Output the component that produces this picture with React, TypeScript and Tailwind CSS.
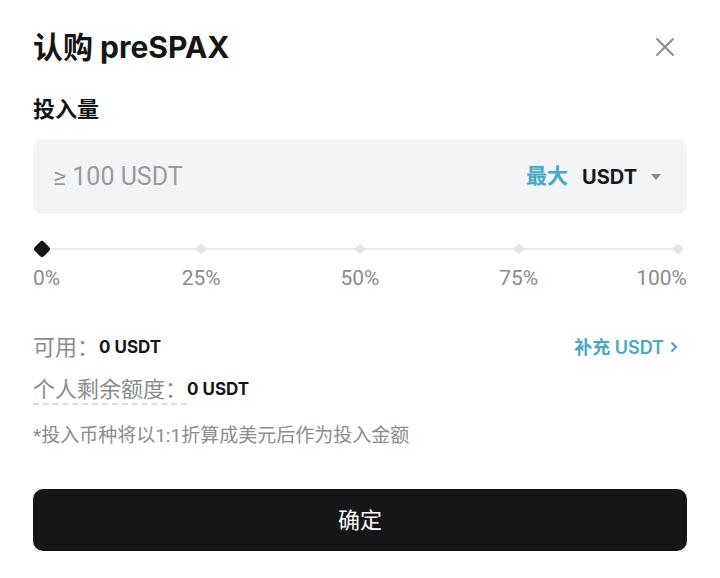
import { X } from "lucide-react";

const FONT = { fontFamily: 'Roboto, "Noto Sans CJK SC", sans-serif' };
const BOLD = { fontFamily: 'Inter, "Noto Sans CJK SC", sans-serif' };

const MARKS = [
  { label: "0%", pos: "0%", align: "justify-start" },
  { label: "25%", pos: "25%", align: "justify-center" },
  { label: "50%", pos: "50%", align: "justify-center" },
  { label: "75%", pos: "75%", align: "justify-center" },
  { label: "100%", pos: "100%", align: "justify-end" },
];

function Slider() {
  return (
    <div className="mt-[25px]">
      <div className="relative h-[20px] mx-[9px]">
        <div className="absolute left-0 right-0 top-1/2 h-[2px] -translate-y-1/2 bg-[#e9e9eb]" />
        {MARKS.map((m, i) => (
          <div
            key={m.label}
            className="absolute top-1/2 -translate-x-1/2 -translate-y-1/2"
            style={{ left: m.pos }}
          >
            {i === 0 ? (
              <div className="w-[13px] h-[13px] rotate-45 rounded-[3px] bg-[#161618]" />
            ) : (
              <div className="w-[8px] h-[8px] rotate-45 rounded-[1px] bg-[#e4e4e6]" />
            )}
          </div>
        ))}
      </div>
      <div className="mt-[7px] flex justify-between h-[24px] leading-[24px] text-[21px] text-[#8b8b8b]">
        {MARKS.map((m) => (
          <div key={m.label} className={`w-[19px] flex whitespace-nowrap ${m.align}`}>
            {m.label}
          </div>
        ))}
      </div>
    </div>
  );
}

export default function App() {
  return (
    <div className="w-[720px] h-[578px] bg-white px-[33px] text-[#161618]" style={FONT}>
      <div className="h-[94px] flex items-center justify-between">
        <h1 className="text-[30px] font-bold" style={BOLD}>认购 preSPAX</h1>
        <button className="mr-[6px] text-[#8a8a8a]">
          <X size={32} strokeWidth={1.4} />
        </button>
      </div>

      <div className="h-[32px] leading-[32px] text-[22px] font-semibold">投入量</div>

      <div className="mt-[13px] h-[75px] rounded-[10px] bg-[#f3f4f6] flex items-center px-[20px]">
        <span className="flex-1 text-[25px] text-[#9b9b9b]">≥ 100 USDT</span>
        <span className="text-[21px] font-bold text-[#48a7c9]">最大</span>
        <span className="ml-[14px] text-[20px] font-bold" style={BOLD}>USDT</span>
        <svg className="ml-[14px] mr-[6px]" width="10" height="6" viewBox="0 0 10 6">
          <path d="M0 0h10L5 6z" fill="#8a8a8a" />
        </svg>
      </div>

      <Slider />

      <div className="mt-[45px] h-[24px] flex items-center justify-between">
        <div className="flex items-center">
          <span className="text-[22px] text-[#8b8b8b]">可用：</span>
          <span className="text-[17px] font-bold translate-y-[1px]" style={BOLD}>0 USDT</span>
        </div>
        <button className="flex items-center text-[18px] font-semibold text-[#48a7c9] mr-[9px]" style={BOLD}>
          补充 USDT
          <svg className="ml-[6px]" width="8" height="12" viewBox="0 0 8 12" fill="none">
            <path d="M1.5 1.5 6 6l-4.5 4.5" stroke="currentColor" strokeWidth="2" />
          </svg>
        </button>
      </div>

      <div className="mt-[18px] h-[24px] flex items-center">
        <span className="text-[22px] text-[#8b8b8b] leading-[24px] border-b-2 border-dashed border-[#dcdcdc] pb-[1px] translate-y-[2px]">
          个人剩余额度：
        </span>
        <span className="text-[17px] font-bold translate-y-[1px]" style={BOLD}>0 USDT</span>
      </div>

      <div className="mt-[23px] h-[24px] leading-[24px] text-[19px] text-[#8b8b8b]">
        *投入币种将以1:1折算成美元后作为投入金额
      </div>

      <button className="mt-[41px] w-full h-[62px] rounded-[10px] bg-[#161618] text-white text-[22px] font-normal">
        确定
      </button>
    </div>
  );
}
